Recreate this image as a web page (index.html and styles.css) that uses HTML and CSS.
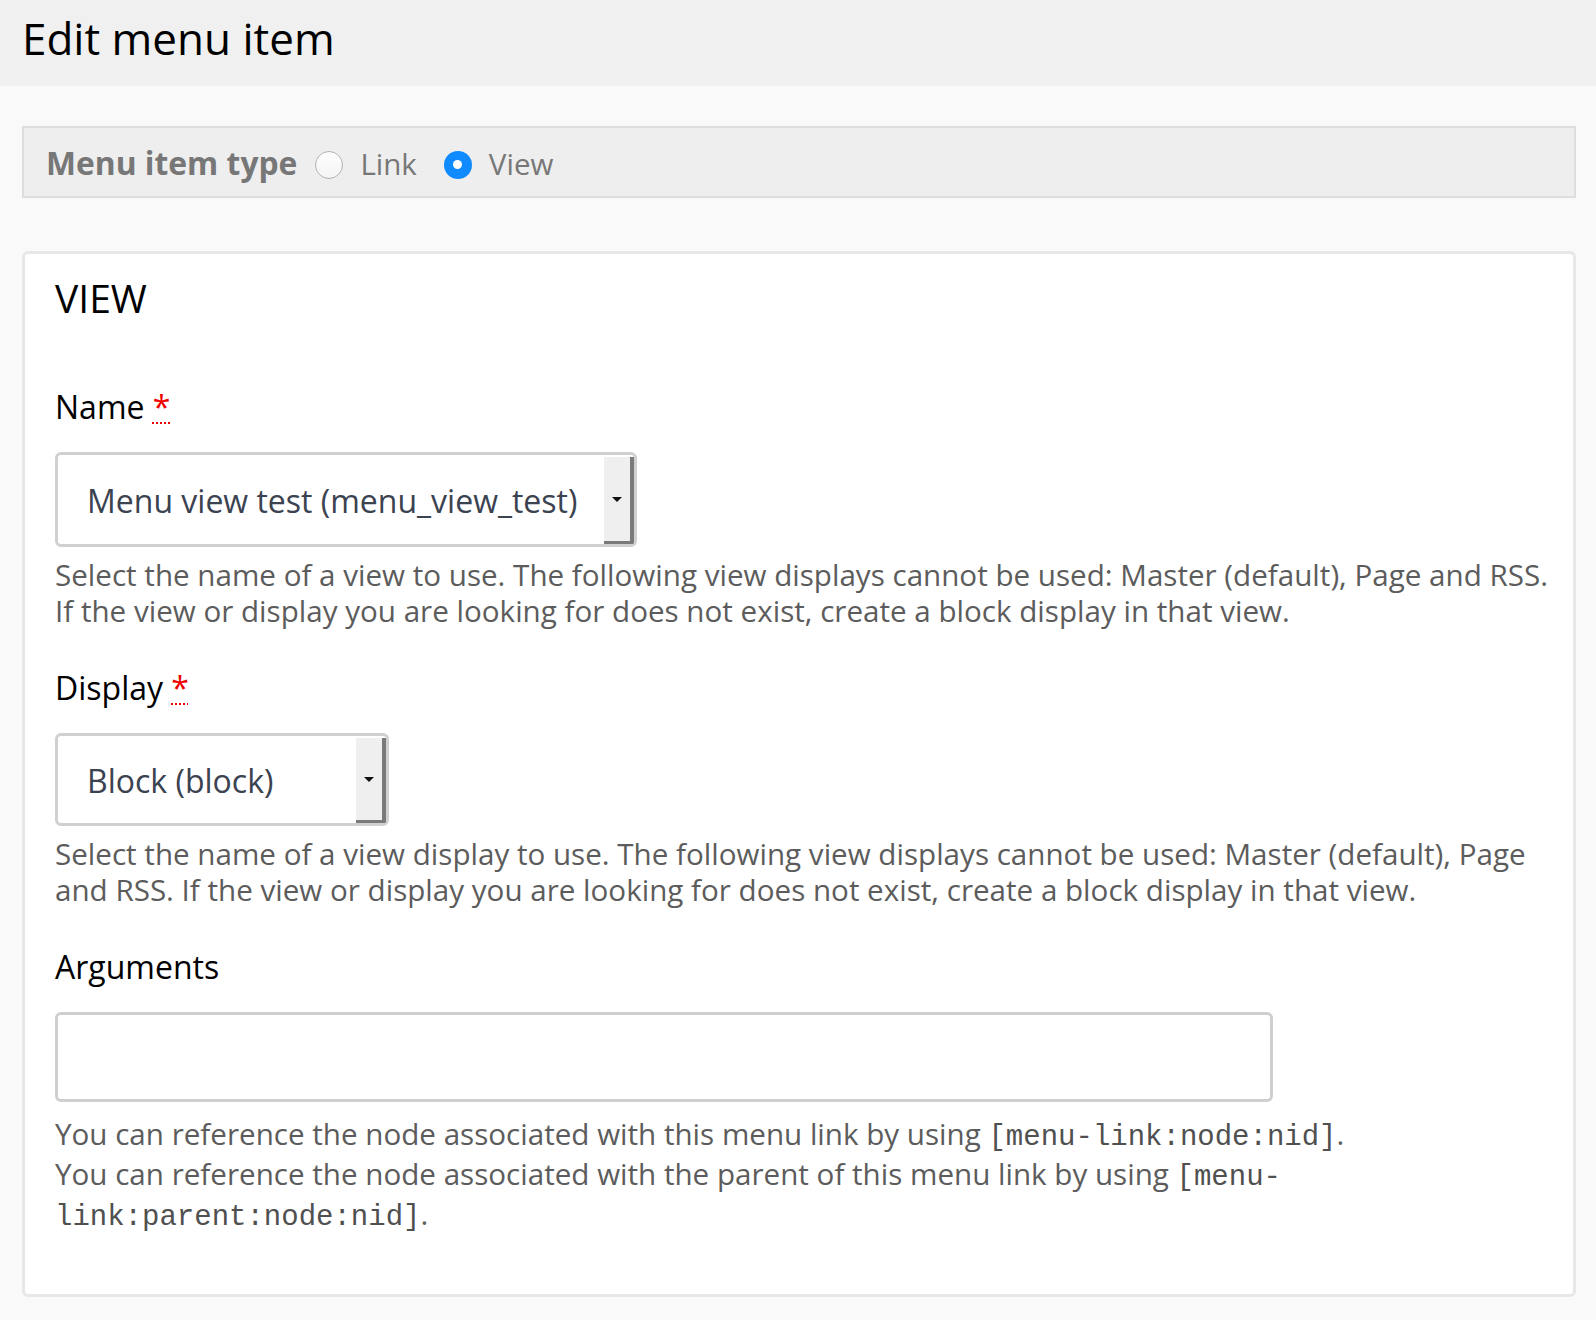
FILE: index.html
```html
<!DOCTYPE html>
<html lang="en">
<head>
<meta charset="utf-8">
<title>Edit menu item</title>
<link rel="stylesheet" href="styles.css">
</head>
<body>
<header class="page-header">
  <h1 class="page-title">Edit menu item</h1>
</header>
<main class="content">
  <div class="type-bar">
    <span class="type-label">Menu item type</span>
    <label class="radio-option"><span class="radio"></span><span class="radio-text">Link</span></label>
    <label class="radio-option"><span class="radio radio-checked"></span><span class="radio-text">View</span></label>
  </div>

  <section class="panel">
    <h2 class="panel-title">VIEW</h2>

    <div class="form-item">
      <div class="form-label">Name <abbr class="req" title="This field is required.">*</abbr></div>
      <div class="select select-name">
        <span class="select-value">Menu view test (menu_view_test)</span>
        <span class="select-btn"><span class="select-arrow"></span></span>
      </div>
      <p class="description">Select the name of a view to use. The following view displays cannot be used: Master (default), Page and RSS. If the view or display you are looking for does not exist, create a block display in that view.</p>
    </div>

    <div class="form-item">
      <div class="form-label">Display <abbr class="req" title="This field is required.">*</abbr></div>
      <div class="select select-display">
        <span class="select-value">Block (block)</span>
        <span class="select-btn"><span class="select-arrow"></span></span>
      </div>
      <p class="description">Select the name of a view display to use. The following view displays cannot be used: Master (default), Page and RSS. If the view or display you are looking for does not exist, create a block display in that view.</p>
    </div>

    <div class="form-item">
      <div class="form-label">Arguments</div>
      <div class="text-input"></div>
      <p class="description description-code">You can reference the node associated with this menu link by using <code>[menu-link:node:nid]</code>.<br>You can reference the node associated with the parent of this menu link by using <code>[menu-link:parent:node:nid]</code>.</p>
    </div>
  </section>
</main>
</body>
</html>
```

FILE: styles.css
```css
html, body {
  margin: 0;
  padding: 0;
}

body {
  background: #f9f9f9;
  font-family: "Open Sans", "Noto Sans", sans-serif;
  color: #000;
  min-height: 1320px;
}

.page-header {
  background: #f0f0f0;
  height: 86px;
  padding: 0 22px;
  box-sizing: border-box;
}

.page-title {
  margin: 0;
  font-size: 44px;
  font-weight: 400;
  line-height: 76px;
}

.content {
  padding: 40px 20px 25px 22px;
}

.type-bar {
  display: flex;
  align-items: center;
  height: 72px;
  box-sizing: border-box;
  background: #eeeeee;
  border: 2px solid #dddddd;
  padding: 0 22px;
  color: #777;
}

.type-label {
  font-size: 31.8px;
  font-weight: 700;
  margin-right: 18px;
}

.radio-option {
  display: flex;
  align-items: center;
  margin-right: 27px;
}

.radio {
  width: 28px;
  height: 28px;
  box-sizing: border-box;
  border-radius: 50%;
  border: 1px solid #b3b3b3;
  background: linear-gradient(#ffffff, #f4f4f4);
  margin-top: 5px;
  margin-right: 17px;
  display: flex;
  align-items: center;
  justify-content: center;
}

.radio-checked {
  border: none;
  background: #0f8bff;
}

.radio-checked::after {
  content: "";
  width: 9px;
  height: 9px;
  border-radius: 50%;
  background: #fff;
}

.radio-text {
  font-size: 29.5px;
  font-weight: 400;
  padding-top: 2px;
}

.panel {
  margin-top: 53px;
  background: #fff;
  border: 3px solid #e7e7e7;
  border-radius: 6px;
  padding: 20px 20px 60px 30px;
}

.panel-title {
  margin: 0;
  font-size: 39px;
  font-weight: 400;
  line-height: 47px;
}

.form-item {
  margin-top: 40px;
}

.form-item:first-of-type {
  margin-top: 66px;
}

.form-label {
  font-size: 32px;
  line-height: 40px;
  margin-bottom: 25px;
}

.req {
  color: #ee0000;
  text-decoration: underline dotted #ee0000;
  text-decoration-thickness: 2px;
  text-underline-offset: 3px;
}

.select {
  display: flex;
  box-sizing: border-box;
  height: 95px;
  border: 3px solid #d0d0d0;
  border-radius: 6px;
  background: #fff;
}

.select-name {
  width: 582px;
}

.select-display {
  width: 334px;
  height: 93px;
}

.select-value {
  flex: 1;
  display: flex;
  align-items: center;
  padding-left: 29px;
  padding-top: 2px;
  font-size: 32px;
  color: #3b4250;
  white-space: nowrap;
}

.select-btn {
  width: 26px;
  margin-top: 2px;
  background: #efefef;
  border-right: 4px solid #7a7a7a;
  border-bottom: 3px solid #7a7a7a;
  border-bottom-right-radius: 2px;
  display: flex;
  align-items: center;
  justify-content: center;
}

.select-arrow {
  width: 0;
  height: 0;
  border-left: 5px solid transparent;
  border-right: 5px solid transparent;
  border-top: 5px solid #111;
}

.description {
  margin: 10px 0 0;
  font-size: 29.6px;
  line-height: 35.6px;
  color: #5c5c5c;
}

.description-code {
  margin-top: 12px;
  line-height: 40px;
}

code {
  font-family: "Liberation Mono", "Courier New", monospace;
  font-size: 29px;
  line-height: 1;
  color: #505050;
}

.text-input {
  box-sizing: border-box;
  width: 1218px;
  height: 90px;
  border: 3px solid #cfcfcf;
  border-radius: 6px;
  background: #fff;
}
```
